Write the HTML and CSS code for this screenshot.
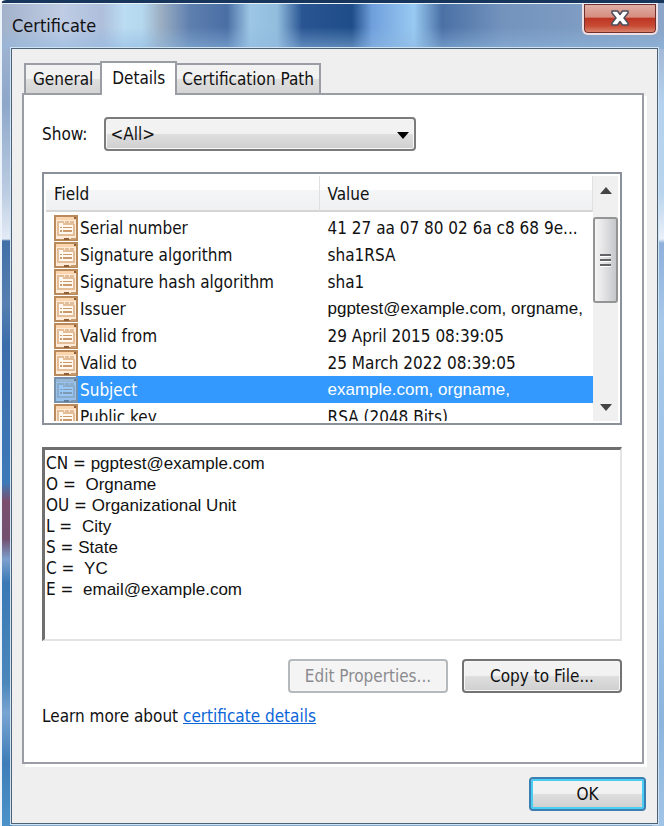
FILE: index.html
```html
<!DOCTYPE html>
<html lang="en">
<head>
<meta charset="utf-8">
<title>Certificate</title>
<link rel="stylesheet" href="styles.css">
</head>
<body>
<svg class="defs" aria-hidden="true">
  <symbol id="cert" viewBox="0 0 24 26">
    <path fill="#fdebd8" stroke="#b98a5c" stroke-width="2" d="M1 1h22v24H1z"/>
    <path fill="#fbd5ae" d="M2 2h20v3H2z"/>
    <path fill="#8f6038" d="M20 2h2v2h-2zM10 23h5v2h-5z"/>
    <path fill="#c99a6c" d="M17 23h5v2h-5z"/>
    <path fill="#e3bd98" d="M3 6h7v2h1V6h4v2h1V6h4v3h1v12H3z"/>
    <path fill="#fff8f0" d="M5 8h4v2h10v9H5z"/>
    <path fill="#c99a6c" d="M6 12h2v1H6zM9 12h9v1H9zM6 15h2v2H6zM9 15h9v2H9z"/>
  </symbol>
</svg>
<div class="window">
  <header class="titlebar">
    <h1 class="title">Certificate</h1>
    <button class="close" type="button" aria-label="Close">
      <svg width="18" height="16" viewBox="0 0 18 16" aria-hidden="true"><path fill="#fff" stroke="#4b4c5c" stroke-width="1.500" stroke-linejoin="round" d="M1 1h5.500L9 4.500 11.500 1H17v2l-4 5 4 5v2h-5.500L9 11.500 6.500 15H1v-2l4-5-4-5z"/></svg>
    </button>
  </header>
  <main class="client">
    <div class="tabs" role="tablist">
      <button class="tab" type="button" role="tab">General</button>
      <button class="tab active" type="button" role="tab" aria-selected="true">Details</button>
      <button class="tab" type="button" role="tab">Certification Path</button>
    </div>
    <section class="panel">
      <div class="show">
        <label for="show">Show:</label>
        <div class="combo">
          <select id="show"><option>&lt;All&gt;</option></select>
          <svg class="arrow" width="12" height="7" viewBox="0 0 12 7" aria-hidden="true"><path d="M0 0h12L6 7z"/></svg>
        </div>
      </div>
      <div class="list">
        <table class="fields">
          <thead><tr><th>Field</th><th>Value</th></tr></thead>
          <tbody>
            <tr><td><span class="name"><svg><use href="#cert"/></svg>Serial number</span></td><td>41 27 aa 07 80 02 6a c8 68 9e...</td></tr>
            <tr><td><span class="name"><svg><use href="#cert"/></svg>Signature algorithm</span></td><td>sha1RSA</td></tr>
            <tr><td><span class="name"><svg><use href="#cert"/></svg>Signature hash algorithm</span></td><td>sha1</td></tr>
            <tr><td><span class="name"><svg><use href="#cert"/></svg>Issuer</span></td><td class="plain">pgptest@example.com, orgname,</td></tr>
            <tr><td><span class="name"><svg><use href="#cert"/></svg>Valid from</span></td><td>29 April 2015 08:39:05</td></tr>
            <tr><td><span class="name"><svg><use href="#cert"/></svg>Valid to</span></td><td>25 March 2022 08:39:05</td></tr>
            <tr class="selected"><td><span class="name"><svg><use href="#cert"/></svg>Subject</span></td><td class="plain">example.com, orgname,</td></tr>
            <tr><td><span class="name"><svg><use href="#cert"/></svg>Public key</span></td><td>RSA (2048 Bits)</td></tr>
          </tbody>
        </table>
        <div class="scrollbar">
          <button type="button" aria-label="Scroll up"><svg width="12" height="7" viewBox="0 0 12 7"><path fill="#444" d="M0 7h12L6 0z"/></svg></button>
          <div class="thumb"><i></i><i></i><i></i></div>
          <button class="down" type="button" aria-label="Scroll down"><svg width="12" height="7" viewBox="0 0 12 7"><path fill="#444" d="M0 0h12L6 7z"/></svg></button>
        </div>
      </div>
      <div class="detail" role="textbox" aria-readonly="true" aria-multiline="true" aria-label="Field value" tabindex="0">
        <p>CN = <span>pgptest@example.com</span></p>
        <p>O =  <span>Orgname</span></p>
        <p>OU = <span>Organizational Unit</span></p>
        <p>L =  <span>City</span></p>
        <p>S = <span>State</span></p>
        <p>C =  <span>YC</span></p>
        <p>E =  <span>email@example.com</span></p>
      </div>
      <div class="actions">
        <button class="btn" type="button" disabled>Edit Properties...</button>
        <button class="btn" type="button">Copy to File...</button>
      </div>
      <p class="learn">Learn more about <a href="#details">certificate details</a></p>
    </section>
    <footer class="footer"><button class="btn ok" type="button">OK</button></footer>
  </main>
</div>
</body>
</html>
```
FILE: styles.css
```css
* { box-sizing: border-box; }

body {
  margin: 0;
  font: 17px/20px "DejaVu Sans Condensed", "DejaVu Sans", sans-serif;
  font-stretch: condensed;
  color: #111;
  background: #fff;
}

h1, p { margin: 0; font-size: inherit; font-weight: normal; }

button, select { font: inherit; color: inherit; margin: 0; padding: 0; }

.defs { display: none; }

.window {
  display: flex;
  flex-direction: column;
  min-height: 100vh;
  padding: 0 6px 2px 9px;
  border-top: 3px solid #18365c;
  border-left: 2px solid #edf3fa;
  border-radius: 6px 0 0 0;
  background:
    linear-gradient(transparent 24px, #8fb8e090 46px) 0 0 / 100% 46px no-repeat,
    linear-gradient(90deg, #a3b2cb 0, #bfcce4 60px, #aebfdc 100px, #bbdcf2 122px, #b5d8ef 140px, #9db0c4 158px, #5e7fae 188px, #4a6fa5 225px, #9cc6e4 248px, #93bddd 275px, #295593 300px, #1f4d89 350px, #6f9fdc 370px, #98caf2 412px, #4a70a5 440px, #7393bd 500px, #8ba6c8 100%) 0 0 / 100% 46px no-repeat,
    linear-gradient(#9db2d0 46px, #8da7ca 100px, #bccde2 190px, #e3ebf5 236px, #416fa7 238px, #557fb0 300px, #3c6dab 340px, #3d79b8 480px, #7a4f6e 498px, #73506f 536px, #7d9fcd 556px, #3979b5 580px, #4b87bb 680px, #78a4d2 710px, #3f7db8 760px, #4c93c9) 0 0 / 10px 100% no-repeat,
    linear-gradient(#a3b8d6 46px, #b3d2ef 100px, #b8d4ee 190px, #eaf1fa 236px, #8fb0db 240px, #a6c8e9 320px, #98c0e6 600px, #8db5dc 720px, #a1c4e6) 100% 0 / 12px 100% no-repeat,
    #7fa9d0;
}

.titlebar {
  display: flex;
  justify-content: space-between;
  align-items: flex-start;
  height: 45px;
  border-top: 1px solid #e9f1fa;
  margin-left: -9px;
  padding-left: 10px;
}

.title { padding-top: 12px; font-size: 18px; }

.close {
  display: flex;
  justify-content: center;
  width: 76px;
  height: 31px;
  padding-top: 6px;
  border: 2px solid #efdfe2;
  border-top: 0;
  border-radius: 0 0 6px 6px;
  background: linear-gradient(#e0b0a8, #d78d80 45%, #bd3524 50%, #c84a34 75%, #dc8b74);
  box-shadow: inset 0 0 0 1px #6f3030;
}

.client {
  flex: 1;
  display: flex;
  flex-direction: column;
  padding: 12px 13px 12px 10px;
  border: 1px solid #4d6176;
  outline: 1px solid #cfe3f2;
  background: #efefef;
}

.tabs { display: flex; align-items: flex-end; padding-left: 2px; }

.tab {
  height: 30px;
  padding: 0 5px;
  border: 2px solid #9b9da5;
  border-left-width: 0;
  border-bottom: 0;
  background: linear-gradient(#f2f2f2 0 48%, #dfdfdf 52%, #d4d4d4);
}

.tab:first-child { padding: 0 7px; border-left-width: 2px; border-right: 0; }

.tab.active {
  height: 34px;
  margin-bottom: -2px;
  padding: 0 10px 3px;
  border-left-width: 2px;
  background: #fff;
  position: relative;
}

.panel {
  flex: 1;
  padding: 22px 20px 0 18px;
  border: 2px solid #9b9da5;
  background: #fff;
  box-shadow: 3px 3px 0 #fff;
}

.show { display: flex; align-items: center; gap: 16px; }

.combo { position: relative; flex: 0 1 312px; }

.combo select {
  width: 100%;
  height: 34px;
  padding: 0 5px;
  appearance: none;
  border: 2px solid #7b7b7b;
  border-radius: 4px;
  background: linear-gradient(#f2f2f2 0 48%, #dedede 52%, #cfcfcf);
  box-shadow: inset 0 0 0 1px #f7f7f7;
}

.arrow { position: absolute; right: 7px; top: 15px; pointer-events: none; }

.list {
  display: flex;
  height: 253px;
  margin-top: 21px;
  padding: 2px;
  border: 2px solid #8a919b;
  overflow: hidden;
}

.fields {
  flex: 1;
  display: block;
  overflow: hidden;
  border-collapse: collapse;
}

.fields thead, .fields tbody { display: block; }

.fields tr { display: grid; grid-template-columns: 50% 50%; white-space: nowrap; }

.fields thead { margin-bottom: 2px; }

.fields th {
  height: 36px;
  padding: 8px;
  border-right: 1px solid #dfe0e2;
  border-bottom: 2px solid #d5d5d5;
  background: linear-gradient(#fff 0 40%, #f4f5f7 42%, #f0f1f3);
  font-weight: normal;
  text-align: left;
}

.fields td { height: 27px; padding: 4px 8px 3px; }

.fields td:first-child { padding: 0 0 0 8px; }

.fields .plain, .detail span { font-family: "Liberation Sans", Arial, sans-serif; }

.name { display: flex; align-items: center; gap: 2px; height: 27px; }

.name svg { width: 24px; height: 26px; }

.selected { color: #fff; background: linear-gradient(90deg, #fff 30px, #3399ff 30px); }

.selected svg { background: #3399ff; }

.selected use { opacity: .5; }

.scrollbar {
  flex: 0 0 25px;
  display: flex;
  flex-direction: column;
  align-items: stretch;
  background: #f0f0f0;
}

.scrollbar button { height: 41px; border: 0; background: none; line-height: 0; padding-bottom: 12px; }

.scrollbar .down { margin-top: auto; height: 28px; padding: 0; }

.thumb {
  display: flex;
  flex-direction: column;
  align-items: center;
  justify-content: center;
  gap: 2px;
  height: 86px;
  border: 2px solid #949494;
  border-radius: 3px;
  background: linear-gradient(90deg, #f5f5f5, #e2e2e4 45%, #c6c7cb);
}

.thumb i { width: 11px; height: 3px; background: #636368; border-bottom: 1px solid #fff; }

.detail {
  min-height: 194px;
  margin-top: 22px;
  padding: 3px 1px;
  border: 2px solid #e3e3e3;
  border-top: 3px solid #6f6f6f;
  border-left: 3px solid #6f6f6f;
  line-height: 21px;
}

.detail p { height: 21px; white-space: pre; }

.actions { display: flex; justify-content: flex-end; gap: 14px; margin-top: 18px; }

.btn {
  width: 160px;
  height: 34px;
  border: 2px solid #737373;
  border-radius: 4px;
  background: linear-gradient(#f2f2f2 0 48%, #dedede 52%, #cfcfcf);
  box-shadow: inset 0 0 0 1px #f7f7f7;
}

.btn:disabled { color: #8b8b8f; border-color: #b4b9bd; background: #f4f4f4; }

.learn { margin-top: 13px; }

.learn a { color: #0b66d8; }

.footer { display: flex; justify-content: flex-end; margin: 13px -2px 0 0; }

.ok { width: 117px; border-color: #3c7fb1; box-shadow: inset 0 0 0 2px #49cdf2; }
```
